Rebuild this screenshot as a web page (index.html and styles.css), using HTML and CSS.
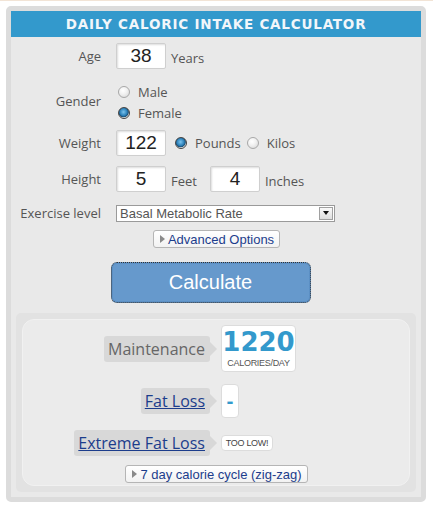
FILE: index.html
```html
<!DOCTYPE html>
<html lang="en">
<head>
  <meta charset="UTF-8" />
  <title>Daily Caloric Intake Calculator</title>
  <link rel="stylesheet" href="styles.css">
</head>
<body>
  <div class="calc">
    <h1 class="calc-title">Daily Caloric Intake Calculator</h1>

    <!-- form -->
    <form class="calc-form">
      <div class="row row-age">
        <label class="lbl">Age</label>
        <input class="num" type="text" value="38">
        <span class="unit">Years</span>
      </div>

      <div class="row row-gender">
        <label class="lbl">Gender</label>
        <div class="choices">
          <label class="choice"><input type="radio" name="gender"> Male</label>
          <label class="choice"><input type="radio" name="gender" checked> Female</label>
        </div>
      </div>

      <div class="row row-weight">
        <label class="lbl">Weight</label>
        <input class="num" type="text" value="122">
        <label class="choice inline"><input type="radio" name="unit" checked> Pounds</label>
        <label class="choice inline"><input type="radio" name="unit"> Kilos</label>
      </div>

      <div class="row row-height">
        <label class="lbl">Height</label>
        <input class="num" type="text" value="5">
        <span class="unit">Feet</span>
        <input class="num num-in" type="text" value="4">
        <span class="unit">Inches</span>
      </div>

      <div class="row row-exercise">
        <label class="lbl">Exercise level</label>
        <div class="select-box">
          <select class="select">
            <option>Basal Metabolic Rate</option>
          </select>
          <span class="select-arrow"></span>
        </div>
      </div>

      <div class="row-center row-adv">
        <button type="button" class="toggle-btn"><span class="tri"></span>Advanced Options</button>
      </div>

      <div class="row-center row-calc">
        <button type="button" class="calc-btn">Calculate</button>
      </div>
    </form>

    <!-- results -->
    <div class="results">
      <div class="results-inner">
        <div class="res-row res-main">
          <div class="res-left"><span class="tag">Maintenance</span></div>
          <div class="val val-big">
            <span class="val-num">1220</span>
            <span class="val-unit">CALORIES/DAY</span>
          </div>
        </div>
        <div class="res-row res-fat">
          <div class="res-left"><span class="tag"><a href="#">Fat Loss</a></span></div>
          <div class="val val-dash">-</div>
        </div>
        <div class="res-row res-extreme">
          <div class="res-left"><span class="tag"><a href="#">Extreme Fat Loss</a></span></div>
          <div class="val val-low">TOO LOW!</div>
        </div>
        <div class="row-center res-cycle">
          <button type="button" class="toggle-btn"><span class="tri"></span>7 day calorie cycle (zig-zag)</button>
        </div>
      </div>
    </div>
  </div>
</body>
</html>
```

FILE: styles.css
```css
body {
  margin: 0;
  border-top: 1px solid #f2e4d6;
  font-family: 'Open Sans', 'Liberation Sans', sans-serif;
  color: #555;
  background: #fff;
}

.calc {
  width: 410px;
  margin: 5px 0 0 6px;
  border: 5px solid #dcdcdc;
  border-radius: 5px;
  background: #e9e9e9;
}

.calc-title {
  margin: 0;
  height: 26px;
  line-height: 26px;
  background: #3399cc;
  color: #f2f6fa;
  font-family: 'DejaVu Sans', Verdana, sans-serif;
  font-size: 13.5px;
  font-weight: 700;
  letter-spacing: 0.8px;
  text-align: center;
  text-transform: uppercase;
}

/* form rows */
.row {
  display: flex;
  align-items: center;
}

.lbl {
  width: 90px;
  margin-right: 15px;
  text-align: right;
  font-size: 13px;
  color: #555;
}

.row-age { margin-top: 6px; }
.row-gender { margin-top: 12px; }
.row-weight { margin-top: 7px; }
.row-height { margin-top: 10px; }
.row-exercise { margin-top: 12px; }

.row-gender .lbl { margin-top: -3px; }

.num {
  width: 50px;
  height: 26px;
  box-sizing: border-box;
  border: 1px solid #cfcfcf;
  border-radius: 2px;
  box-shadow: inset 1px 1px 2px #ddd;
  font-family: 'Liberation Sans', Arial, sans-serif;
  font-size: 19px;
  color: #222;
  text-align: center;
  padding: 0;
}

.unit {
  margin-left: 5px;
  font-size: 13px;
  margin-top: 3px;
}

.num-in { margin-left: 13px; }

.choices {
  display: flex;
  flex-direction: column;
  margin-left: 2px;
}

.choice {
  display: flex;
  align-items: center;
  height: 21px;
  font-size: 13px;
}

.choice.inline { margin-left: 9px; }
.choice.inline + .choice.inline { margin-left: 6px; }

.choice input {
  appearance: none;
  -webkit-appearance: none;
  width: 12px;
  height: 12px;
  margin: 0 8px 0 0;
  border: 1px solid #a8a8a8;
  border-radius: 50%;
  background: radial-gradient(circle at 40% 35%, #fff 0, #f2f2f2 40%, #d4d4d4 100%);
}

.choice input:checked {
  border-color: #444;
  background: radial-gradient(circle at 45% 40%, #7cc4ee 0, #2a7fb8 45%, #1d4f73 60%, #e9e9e9 70%, #fff 100%);
}

/* select */
.select-box {
  display: flex;
  width: 219px;
  height: 17px;
  box-sizing: border-box;
  border: 1px solid #9a9a9a;
  background: #fff;
}

.select {
  flex: 1;
  appearance: none;
  -webkit-appearance: none;
  border: none;
  background: transparent;
  font-family: 'Liberation Sans', Arial, sans-serif;
  font-size: 13px;
  color: #555;
  padding: 0 0 0 3px;
  height: 15px;
  line-height: 15px;
}

.select-arrow {
  width: 14px;
  margin: 1px 1px 1px 0;
  box-sizing: border-box;
  border: 1px solid #a0a0a0;
  background: linear-gradient(#fafafa, #dedede);
  display: flex;
  align-items: center;
  justify-content: center;
}

.select-arrow::before {
  content: "";
  border-left: 3px solid transparent;
  border-right: 3px solid transparent;
  border-top: 4px solid #111;
}

/* buttons */
.row-center {
  display: flex;
  justify-content: center;
}

.row-adv { margin-top: 8px; margin-left: 1px; }
.row-calc { margin-top: 14px; margin-right: 11px; }

.toggle-btn {
  display: flex;
  align-items: center;
  height: 18px;
  padding: 0 5px 0 6px;
  border: 1px solid #b5b5b5;
  border-radius: 3px;
  background: linear-gradient(#ffffff, #f2f2f2);
  font-family: 'Liberation Sans', Arial, sans-serif;
  font-size: 13px;
  color: #1c3d8c;
}

.tri {
  width: 0;
  height: 0;
  margin-right: 3px;
  border-top: 4px solid transparent;
  border-bottom: 4px solid transparent;
  border-left: 5px solid #8a8a8a;
}

.calc-btn {
  width: 200px;
  height: 41px;
  border: 1px dotted #333;
  border-radius: 6px;
  background: #6699cc;
  color: #fff;
  font-family: 'Liberation Sans', Arial, sans-serif;
  font-size: 20px;
  box-shadow: inset 0 0 0 1px #5b8fc4;
}

/* results */
.results {
  margin: 10px 5px 5px;
  padding: 6px;
  border-radius: 5px;
  background: #e2e2e2;
}

.results-inner {
  padding: 5px 0 2px;
  border: 1px solid #f1f1f1;
  border-radius: 12px;
  background: #ebebeb;
}

.res-row {
  display: flex;
  align-items: center;
}

.res-left {
  width: 194px;
  display: flex;
  justify-content: flex-end;
  margin-right: 4px;
}

.tag {
  position: relative;
  margin-right: 7px;
  padding: 0 5px 0 4px;
  height: 26px;
  line-height: 26px;
  border-radius: 3px;
  background: #d8d8d8;
  font-size: 16px;
  color: #666;
}

.tag::after {
  content: "";
  position: absolute;
  right: -7px;
  top: 6px;
  border-top: 7px solid transparent;
  border-bottom: 7px solid transparent;
  border-left: 7px solid #d8d8d8;
}

.tag a {
  color: #1c3d8c;
}

.val {
  background: #fff;
  border: 1px solid #dcdcdc;
  border-radius: 4px;
  box-sizing: border-box;
}

.val-big {
  width: 75px;
  height: 47px;
  display: flex;
  flex-direction: column;
  align-items: center;
}

.val-num {
  margin-top: 2px;
  font-family: 'DejaVu Sans', Verdana, sans-serif;
  font-size: 26px;
  font-weight: 700;
  line-height: 28px;
  color: #3399cc;
}

.val-unit {
  margin-top: 2px;
  font-family: 'Liberation Sans', Arial, sans-serif;
  font-size: 9px;
  line-height: 11px;
  letter-spacing: -0.3px;
  color: #555;
}

.res-fat { margin-top: 12px; }

.val-dash {
  width: 18px;
  height: 34px;
  line-height: 32px;
  text-align: center;
  font-size: 20px;
  font-weight: 700;
  color: #3399cc;
}

.res-extreme { margin-top: 12px; }

.val-low {
  width: 52px;
  height: 16px;
  line-height: 14px;
  text-align: center;
  font-family: 'Liberation Sans', Arial, sans-serif;
  font-size: 9px;
  letter-spacing: -0.3px;
  color: #444;
}

.res-cycle { margin-top: 9px; margin-left: 1px; }
```
